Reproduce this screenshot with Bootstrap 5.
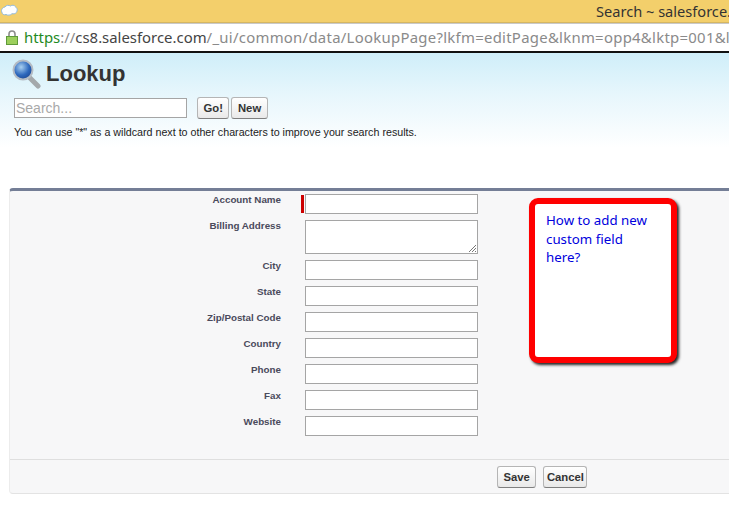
<!DOCTYPE html>
<html lang="en">
<head>
<meta charset="utf-8">
<title>Search ~ salesforce.com</title>
<link href="https://cdn.jsdelivr.net/npm/bootstrap@5.3.0/dist/css/bootstrap.min.css" rel="stylesheet">
<style>
html,body{height:508px;overflow:hidden;background:#fff;}
body{font-family:"Liberation Sans",Arial,sans-serif;color:#333;position:relative;}
.win-title{height:23px;background:#f3cf6b;border-bottom:1px solid #d5b662;padding-left:596px;font:14.6px/23px "Noto Sans",sans-serif;color:#333;white-space:nowrap;overflow:hidden;position:relative;}
.win-cloud{position:absolute;left:1px;top:4px;}
.win-addr{height:30px;background:#fff;border-top:1px solid #c9c9c9;border-bottom:2px solid #111;white-space:nowrap;overflow:hidden;padding-left:6px;gap:6px;font:14.9px/25px "Noto Sans",sans-serif;color:#8a8a8a;}
.url-green{color:#1f8a1f;}
.url-dark{color:#444;}
.url-rest{letter-spacing:.28px;}
.lk-head{height:135px;background:linear-gradient(#cfeef9 0,#e6f6fc 40px,#fff 95px);padding:3px 0 0 12px;}
.lk-title{font-size:22px;font-weight:700;line-height:34px;color:#333;margin:0;}
.lk-title-row{gap:5px;height:36px;}
.lk-search{padding:5px 0 0 2px;gap:2px;}
.lk-input{width:173px;height:20px;border:1px solid #a5a5a5;background:#fff;font-size:14px;line-height:18px;color:#a9a9a9;padding:0 1px;margin-right:8px;margin-top:1px;}
.sf-btn{font-size:11.3px;font-weight:700;color:#333;height:22px;padding:0 5.5px;line-height:20px;border:1px solid #b5b5b5;border-bottom-color:#7f7f7f;border-radius:3px;background:linear-gradient(#fff,#e9e9e9);--bs-btn-hover-bg:#eee;}
.sf-btn-tight{padding:0 2.5px;}
.lk-hint{font-size:10.7px;line-height:14px;color:#222;margin:6px 0 0 2px;white-space:nowrap;}
.lk-panel{margin-left:9px;height:306px;background:#f7f7f8;border-top:3px solid #747e96;border-bottom:1px solid #e3e3e3;border-left:1px solid #ececec;border-top-left-radius:4px;border-bottom-left-radius:4px;}
.lk-body{height:269px;padding-top:3px;border-bottom:1px solid #dfdfdf;}
.lk-row{height:26px;}
.lk-row-tall{height:40px;}
.lk-lab{width:271px;text-align:right;font-size:9.8px;font-weight:700;color:#4a4a5c;line-height:12px;}
.lk-req{width:3px;height:18px;margin:1px 1px 0 20px;background:#c00;}
.lk-gap{width:24px;}
.lk-box{width:173px;height:20px;border:1px solid #a5a5a5;background:#fff;display:block;}
.lk-area{height:34px;position:relative;}
.lk-grip{position:absolute;right:0;bottom:0;}
.lk-foot{gap:7px;padding:6px 0 0 487px;}
.note{position:absolute;left:529px;top:198px;width:148px;height:165px;background:#fff;border:6px solid #f00;border-radius:9px;box-shadow:2px 2px 3px #222;padding:7px 20px 7px 11px;font:13.3px/18.5px "Noto Sans",sans-serif;color:#00d;}
</style>
</head>
<body>
<div class="win-title">Search ~ salesforce.com
<svg class="win-cloud" width="17" height="14" viewBox="0 0 17 14"><path d="M4 3C5 1 8 1 9.500 2 11.500.5 14.500 1.500 15 3.500c1.600.8 1.600 3.500.3 5-1 1.500-3 1.500-4.300 1.200C9.500 11.500 6.500 11.500 5 10.500 3 11.500 1 10 .8 8-.2 6 1.500 3.300 4 3Z" fill="#fff" stroke="#8fb9de"/></svg>
</div>
<div class="win-addr d-flex align-items-center">
<svg width="12" height="15" viewBox="0 0 12 15" class="flex-shrink-0"><path d="M3 7V4a3 3 0 0 1 6 0v3" fill="none" stroke="#8d8d8d" stroke-width="1.600"/><rect x=".5" y="6.500" width="11" height="8" fill="#9ccf5c" stroke="#5f9a3a"/></svg>
<span><span class="url-green">https</span>://<span class="url-dark">cs8.salesforce.com</span><span class="url-rest">/_ui/common/data/LookupPage?lkfm=editPage&amp;lknm=opp4&amp;lktp=001&amp;lksrch=</span></span>
</div>
<div class="lk-head">
<div class="lk-title-row d-flex align-items-center">
<svg width="29" height="30" viewBox="0 0 29 30" class="flex-shrink-0"><defs><radialGradient id="lens" cx=".4" cy=".35" r=".7"><stop offset="0" stop-color="#a9d0f0"/><stop offset=".6" stop-color="#2e68bd"/><stop offset="1" stop-color="#1e4690"/></radialGradient></defs><path d="M17 18 26 27" stroke="#a4a8ab" stroke-width="5" stroke-linecap="round"/><circle cx="11" cy="11" r="9.500" fill="url(#lens)" stroke="#b5bcc4" stroke-width="2"/></svg>
<h1 class="lk-title">Lookup</h1>
</div>
<div class="lk-search d-flex align-items-start">
<div class="lk-input">Search...</div>
<button type="button" class="btn sf-btn">Go!</button>
<button type="button" class="btn sf-btn">New</button>
</div>
<p class="lk-hint">You can use "*" as a wildcard next to other characters to improve your search results.</p>
</div>
<div class="lk-panel">
<div class="lk-body">
<div class="lk-row d-flex"><div class="lk-lab">Account Name</div><div class="lk-req"></div><div class="lk-box"></div></div>
<div class="lk-row lk-row-tall d-flex"><div class="lk-lab">Billing Address</div><div class="lk-gap"></div><div class="lk-box lk-area"><svg class="lk-grip" width="9" height="9" viewBox="0 0 9 9"><path d="M1 8 8 1M4 8 8 4M7 8 8 7" stroke="#777" stroke-width="1"/></svg></div></div>
<div class="lk-row d-flex"><div class="lk-lab">City</div><div class="lk-gap"></div><div class="lk-box"></div></div>
<div class="lk-row d-flex"><div class="lk-lab">State</div><div class="lk-gap"></div><div class="lk-box"></div></div>
<div class="lk-row d-flex"><div class="lk-lab">Zip/Postal Code</div><div class="lk-gap"></div><div class="lk-box"></div></div>
<div class="lk-row d-flex"><div class="lk-lab">Country</div><div class="lk-gap"></div><div class="lk-box"></div></div>
<div class="lk-row d-flex"><div class="lk-lab">Phone</div><div class="lk-gap"></div><div class="lk-box"></div></div>
<div class="lk-row d-flex"><div class="lk-lab">Fax</div><div class="lk-gap"></div><div class="lk-box"></div></div>
<div class="lk-row d-flex"><div class="lk-lab">Website</div><div class="lk-gap"></div><div class="lk-box"></div></div>
</div>
<div class="lk-foot d-flex">
<button type="button" class="btn sf-btn">Save</button>
<button type="button" class="btn sf-btn sf-btn-tight">Cancel</button>
</div>
</div>
<div class="note">How to add new custom field here?</div>
<script src="https://cdn.jsdelivr.net/npm/bootstrap@5.3.0/dist/js/bootstrap.bundle.min.js"></script>
</body>
</html>
